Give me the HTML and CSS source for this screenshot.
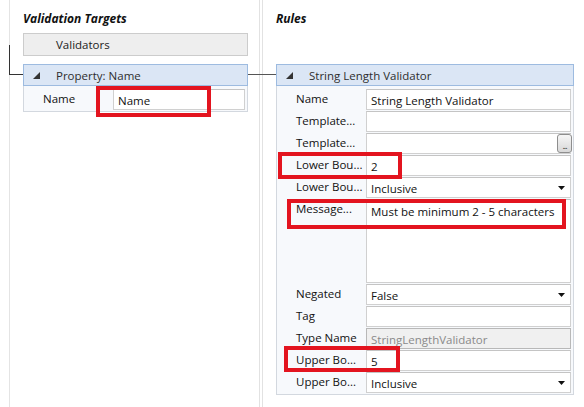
FILE: index.html
```html
<!DOCTYPE html>
<html>
<head>
<meta charset="utf-8">
<link rel="stylesheet" href="styles.css">
</head>
<body>
<div class="app">
  <section class="pane pane-left">
    <h2 class="title">Validation Targets</h2>
    <div class="btn-validators">Validators</div>
    <div class="group">
      <div class="group-head">
        <svg class="tri" width="7" height="7" viewBox="0 0 7 7"><polygon points="7,0 7,7 0,7"/></svg>
        <span>Property: Name</span>
      </div>
      <div class="grid">
        <div class="row"><span class="lbl">Name</span><div class="val">Name</div></div>
      </div>
    </div>
  </section>
  <div class="splitter"></div>
  <section class="pane pane-right">
    <h2 class="title">Rules</h2>
    <div class="spacer"></div>
    <div class="group">
      <div class="group-head">
        <svg class="tri" width="7" height="7" viewBox="0 0 7 7"><polygon points="7,0 7,7 0,7"/></svg>
        <span>String Length Validator</span>
      </div>
      <div class="grid">
        <div class="row"><span class="lbl">Name</span><div class="val">String Length Validator</div></div>
        <div class="row"><span class="lbl">Template...</span><div class="val"></div></div>
        <div class="row"><span class="lbl">Template...</span><div class="val val-btn"><span class="dots">...</span></div></div>
        <div class="row"><span class="lbl">Lower Bou...</span><div class="val">2</div></div>
        <div class="row"><span class="lbl">Lower Bou...</span><div class="val val-drop">Inclusive<svg class="arrow" width="7" height="4" viewBox="0 0 7 4"><polygon points="0,0 7,0 3.5,4"/></svg></div></div>
        <div class="row row-tall"><span class="lbl">Message...</span><div class="val">Must be minimum 2 - 5 characters</div></div>
        <div class="row"><span class="lbl">Negated</span><div class="val val-drop">False<svg class="arrow" width="7" height="4" viewBox="0 0 7 4"><polygon points="0,0 7,0 3.5,4"/></svg></div></div>
        <div class="row"><span class="lbl">Tag</span><div class="val"></div></div>
        <div class="row"><span class="lbl">Type Name</span><div class="val val-disabled">StringLengthValidator</div></div>
        <div class="row"><span class="lbl">Upper Bo...</span><div class="val">5</div></div>
        <div class="row"><span class="lbl">Upper Bo...</span><div class="val val-drop">Inclusive<svg class="arrow" width="7" height="4" viewBox="0 0 7 4"><polygon points="0,0 7,0 3.5,4"/></svg></div></div>
      </div>
    </div>
  </section>

  <div class="conn conn-left-v"></div>
  <div class="conn conn-left-h"></div>
  <div class="conn conn-mid"></div>

  <div class="mark mark-1"></div>
  <div class="mark mark-2"></div>
  <div class="mark mark-3"></div>
  <div class="mark mark-4"></div>
</div>
</body>
</html>
```

FILE: styles.css
```css
* { box-sizing: border-box; }
html, body { margin: 0; padding: 0; background: #fff; }
body {
  font-family: "Open Sans", "Noto Sans", "DejaVu Sans", sans-serif;
  font-size: 11.5px;
  color: #111;
}
.app {
  position: relative;
  display: flex;
  width: 584px;
  height: 407px;
  overflow: hidden;
}
.pane {
  display: flex;
  flex-direction: column;
  padding-top: 11px;
}
.pane-left {
  margin-left: 9px;
  width: 250px;
  border-left: 1px solid #e4e4e4;
  padding-left: 13px;
  padding-right: 11px;
}
.splitter {
  width: 4px;
  border-left: 1px solid #e2e2e2;
  border-right: 1px solid #e2e2e2;
}
.pane-right {
  width: 311px;
  padding-left: 13px;
}
.title {
  margin: 0;
  height: 16px;
  line-height: 16px;
  font-size: 12px;
  font-weight: bold;
  font-style: italic;
  color: #111;
}
.btn-validators {
  margin-top: 6px;
  height: 23px;
  line-height: 21px;
  padding-left: 32px;
  background: #eeeeee;
  border: 1px solid #cccccc;
  color: #222;
}
.spacer { height: 29px; flex: none; }
.group { margin-top: 8px; display: flex; flex-direction: column; }
.group-head {
  display: flex;
  align-items: center;
  height: 22px;
  padding-left: 9px;
  background: #dbe6f5;
  border: 1px solid #9dbbe0;
  color: #2e2e2e;
}
.tri { fill: #333; margin-right: 16px; }
.grid {
  display: flex;
  flex-direction: column;
  gap: 1px;
  padding: 3px 2px 1px 0;
  border: 1px solid #d3d8df;
  border-top: none;
  background: #f7f9fc;
}
.row {
  display: flex;
  height: 21px;
}
.row-tall { height: 84px; }
.lbl {
  width: 89px;
  flex: none;
  padding-left: 19px;
  line-height: 19px;
  white-space: nowrap;
  color: #111;
}
.val {
  flex: 1;
  position: relative;
  display: flex;
  align-items: flex-start;
  padding-left: 4px;
  line-height: 21px;
  background: #fff;
  border: 1px solid #d0d0d0;
  border-top-color: #c4c4c4;
  white-space: nowrap;
}
.row-tall .val { padding-top: 1px; }
.pane-left .val { line-height: 19px; padding-top: 1px; }
.val-drop { justify-content: space-between; padding-right: 5px; }
.arrow { fill: #111; align-self: center; }
.val-btn { justify-content: flex-end; padding-right: 0; border-right: none; }
.dots {
  width: 15px;
  height: 19px;
  margin-right: -1px;
  border: 1px solid #8e8e8e;
  border-radius: 3px;
  background: linear-gradient(#f6f6f6, #d8d8d8);
  font-size: 9px;
  line-height: 22px;
  text-align: center;
  color: #333;
  letter-spacing: -1px;
}
.val-disabled {
  background: #f0f0f0;
  border-color: #b8b8b8;
  color: #8a8a8a;
}

.conn { position: absolute; background: #333; }
.conn-left-v { left: 9px; top: 45px; width: 1px; height: 30px; }
.conn-left-h { left: 9px; top: 74px; width: 14px; height: 1px; }
.conn-mid { left: 248px; top: 74px; width: 28px; height: 1px; background: #555; }

.mark { position: absolute; border: 4px solid #e3141f; }
.mark-1 { left: 96px; top: 86px; width: 115px; height: 31px; }
.mark-2 { left: 278px; top: 152px; width: 124px; height: 27px; }
.mark-3 { left: 287px; top: 199px; width: 279px; height: 30px; }
.mark-4 { left: 284px; top: 346px; width: 116px; height: 26px; }
```
